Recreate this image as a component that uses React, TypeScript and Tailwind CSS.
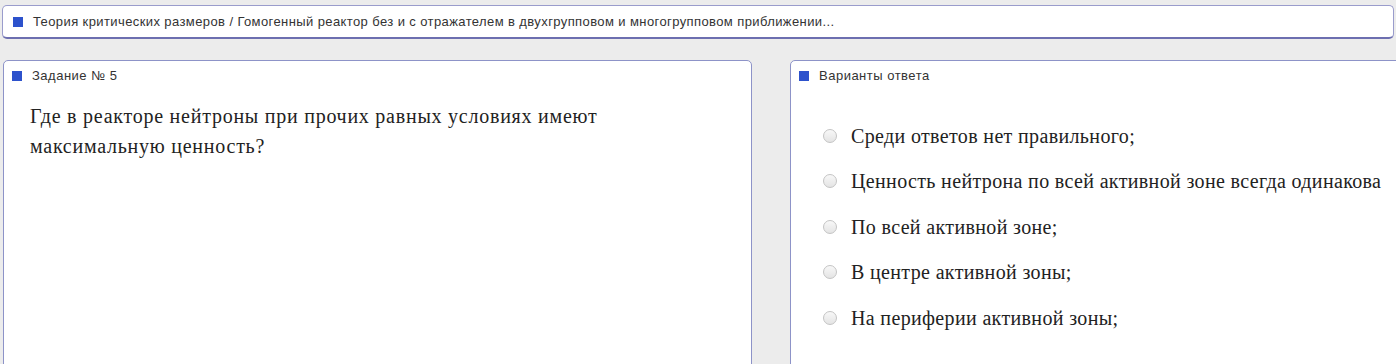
import React from "react";

const options = [
  "Среди ответов нет правильного;",
  "Ценность нейтрона по всей активной зоне всегда одинакова",
  "По всей активной зоне;",
  "В центре активной зоны;",
  "На периферии активной зоны;",
];

function Square() {
  return <span className="inline-block h-[10px] w-[10px] shrink-0 bg-[#2d52cc]" />;
}

export default function App() {
  return (
    <div className="h-[364px] w-[1396px] overflow-hidden bg-[#ececec] font-['Liberation_Sans',Arial,sans-serif]">
      {/* breadcrumb */}
      <div className="pl-[2px] pr-[2px] pt-[5px]">
        <div className="flex h-[34px] items-center gap-[10px] rounded-[5px] border border-b-2 border-[#9a9ccc] border-b-[#6d6fb0] bg-white pl-[10px]">
          <Square />
          <span className="text-[13px] tracking-[0.4px] text-[#333]">
            Теория критических размеров / Гомогенный реактор без и с отражателем в двухгрупповом и многогрупповом приближении...
          </span>
        </div>
      </div>

      <div className="mt-[21px] flex gap-[38px] pl-[3px]">
        {/* task */}
        <div className="h-[320px] w-[749px] shrink-0 rounded-t-[5px] border border-[#8d93c8] bg-white">
          <div className="flex items-center gap-[10px] pl-[8px] pt-[5px]">
            <Square />
            <span className="text-[13px] tracking-[0.5px] text-[#333]">Задание № 5</span>
          </div>
          <p className="mt-[15px] w-[680px] pl-[26px] font-['Liberation_Serif','Times_New_Roman',serif] text-[20px] leading-[30px] tracking-[0.75px] text-[#222]">
            Где в реакторе нейтроны при прочих равных условиях имеют максимальную ценность?
          </p>
        </div>

        {/* answers */}
        <div className="h-[320px] w-[640px] shrink-0 rounded-t-[5px] border border-[#8d93c8] bg-white">
          <div className="flex items-center gap-[10px] pl-[8px] pt-[5px]">
            <Square />
            <span className="text-[13px] tracking-[0.5px] text-[#333]">Варианты ответа</span>
          </div>
          <div className="mt-[39px] flex flex-col gap-[23.5px] pl-[32px]">
            {options.map((o) => (
              <label key={o} className="flex items-center gap-[14px]">
                <span className="h-[14px] w-[14px] rounded-full border border-[#c4c4c4] bg-gradient-to-b from-[#f8f8f8] to-[#e4e4e4]" />
                <span className="font-['Liberation_Serif','Times_New_Roman',serif] text-[20px] leading-[22px] tracking-[0.35px] text-[#222]">
                  {o}
                </span>
              </label>
            ))}
          </div>
        </div>
      </div>
    </div>
  );
}
